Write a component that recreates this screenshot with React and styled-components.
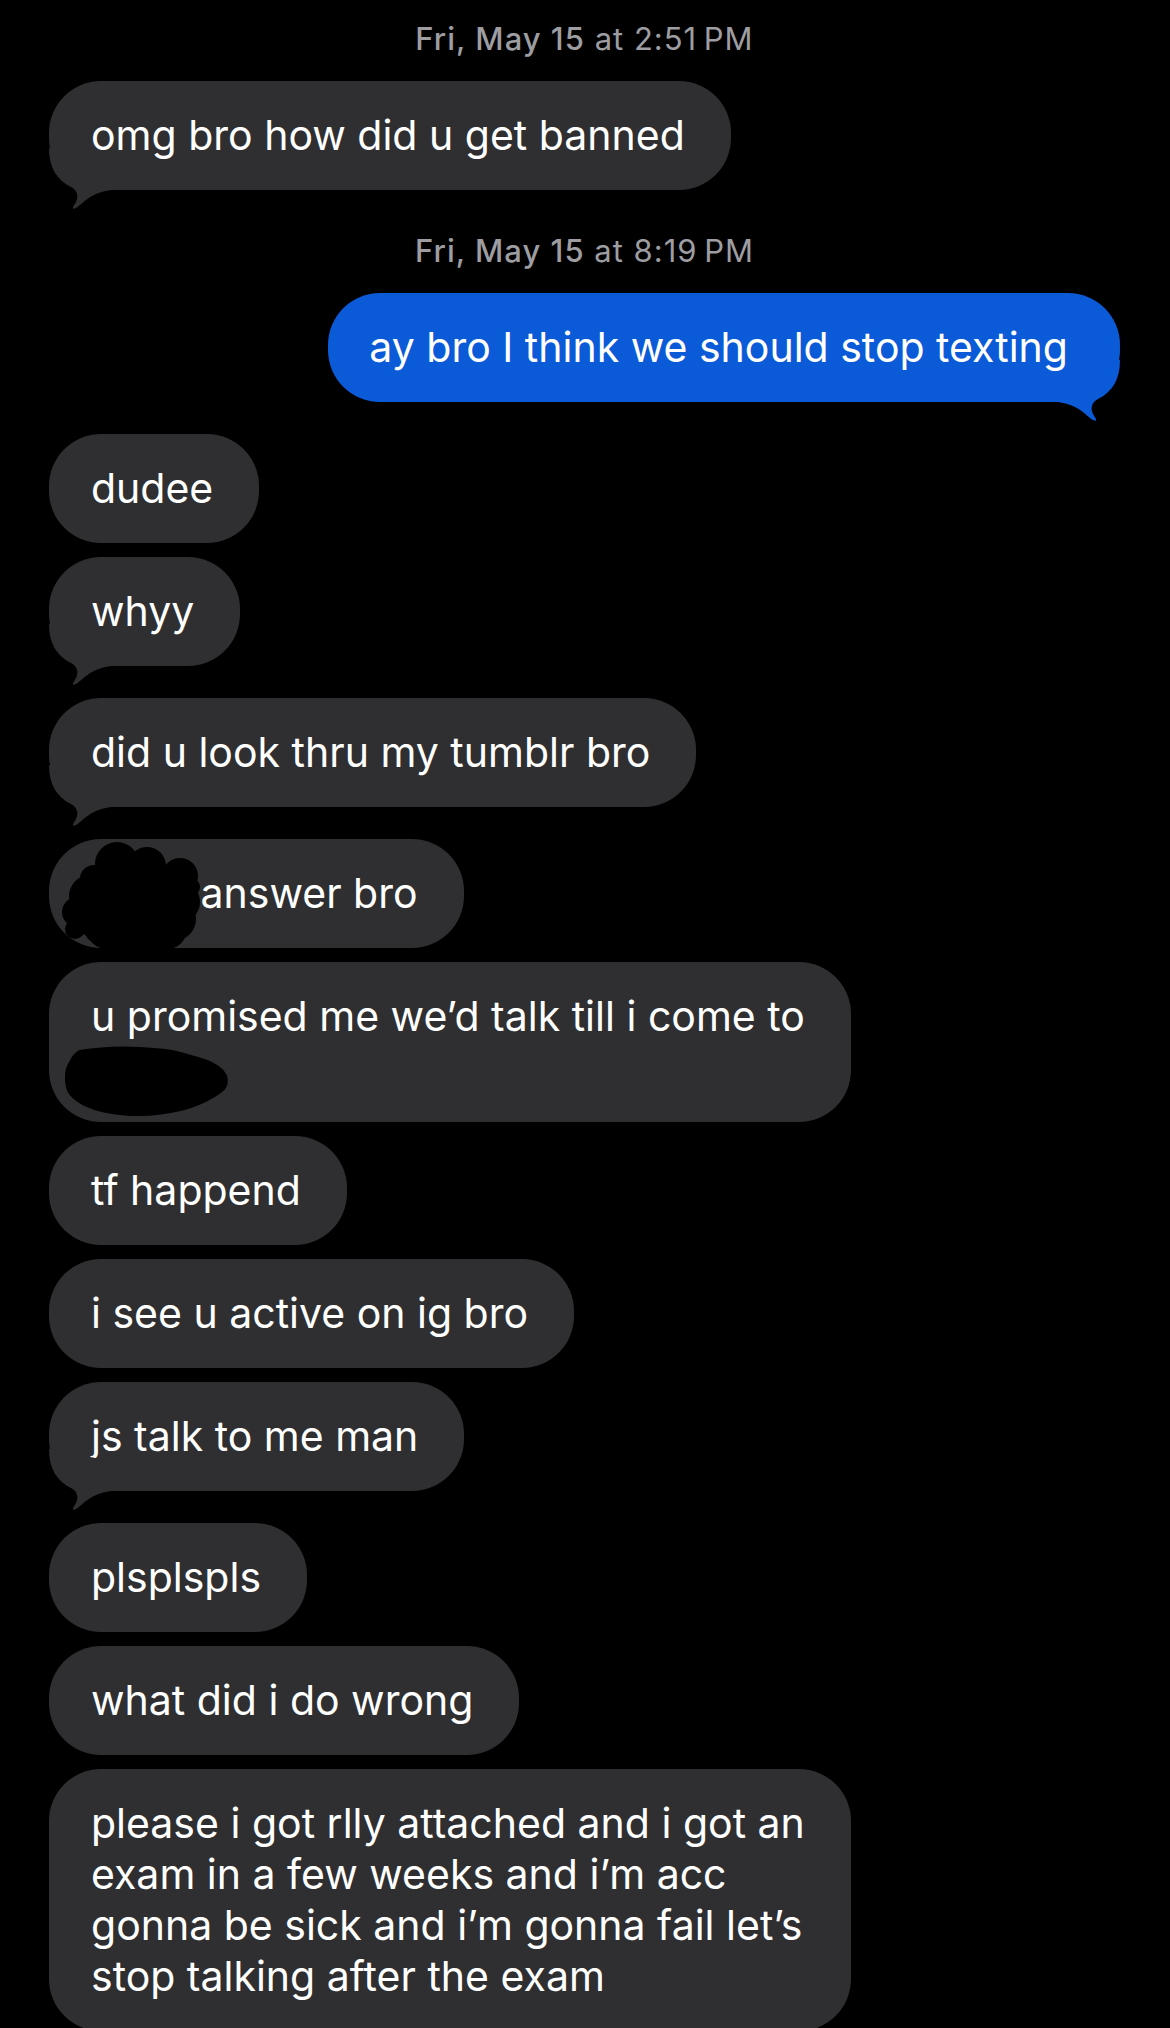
import React from 'react'
import styled, { createGlobalStyle } from 'styled-components'

const GlobalStyle = createGlobalStyle`
  html, body {
    margin: 0;
    padding: 0;
    background: #000;
  }
  body {
    font-family: Inter, "Noto Sans", "Liberation Sans", sans-serif;
    -webkit-font-smoothing: antialiased;
  }
`

const GREY = '#2f2f31'
const BLUE = '#0b5ad8'

const Thread = styled.div`
  display: flex;
  flex-direction: column;
  padding: 22px 50px 0 49px;
  height: 2028px;
  box-sizing: border-box;
  overflow: hidden;
`

const Stamp = styled.div`
  align-self: center;
  font-size: 31px;
  letter-spacing: 1px;
  line-height: 34px;
  color: #9d9da2;
  margin: ${p => (p.$first ? '0' : '12px')} 0 25px;
  b {
    font-weight: 500;
  }
`

const Bubble = styled.div`
  position: relative;
  align-self: ${p => (p.$mine ? 'flex-end' : 'flex-start')};
  background: ${p => (p.$mine ? BLUE : GREY)};
  color: #fff;
  font-size: 41px;
  line-height: 51px;
  padding: ${p => (p.$mine ? '29px 52px 29px 41px' : '29px 46px 29px 42px')};
  border-radius: 52px;
  margin-bottom: ${p => (p.$tail ? 32 : 14)}px;
  white-space: nowrap;
`

const Line = styled.div`
  display: block;
`

const Spacer = styled.span`
  display: inline-block;
  width: ${p => p.$w}px;
  height: 1px;
`

const TailMark = styled.svg`
  position: absolute;
  bottom: -20px;
  width: 70px;
  height: 70px;
  ${p => (p.$mine ? 'right: 0; transform: scaleX(-1);' : 'left: 0;')}
`

const Scribble = styled.svg`
  position: absolute;
  left: 0;
  top: 0;
  overflow: visible;
`

function Tail({ mine }) {
  return (
    <TailMark $mine={mine} viewBox="0 0 70 70">
      <path
        fill={mine ? BLUE : GREY}
        d="M0 8 C0 28 8 40 22 47 C28 50 30 56 27 62 L24 67 Q23 70 27 68 C34 64 40 53 62 50 L62 20 Z"
      />
    </TailMark>
  )
}

// blob of marker strokes over the first word
function BlobScribble() {
  const dots = [
    [68, 25, 22], [98, 27, 19], [131, 37, 18], [41, 57, 21], [28, 73, 15],
    [58, 90, 20], [118, 90, 20], [131, 63, 20], [84, 63, 31], [90, 92, 18],
    [45, 40, 14], [108, 50, 22], [26, 90, 10], [142, 48, 9],
    [70, 62, 34], [108, 72, 30], [58, 82, 26], [98, 96, 20], [40, 76, 20],
    [76, 100, 14], [125, 80, 22],
  ]
  return (
    <Scribble width="160" height="120" viewBox="0 0 160 120">
      {dots.map(([cx, cy, r], i) => (
        <circle key={i} cx={cx} cy={cy} r={r} fill="#000" />
      ))}
    </Scribble>
  )
}

// long oval stroke over the place name
function OvalScribble() {
  return (
    <Scribble width="190" height="160" viewBox="0 0 190 160">
      <path
        fill="#000"
        stroke="#000"
        strokeWidth="6"
        strokeLinejoin="round"
        d="M31 91 C55 87 75 87 91 88 C110 89 122 90 131 93 C145 97 152 99 158 101 C166 105 172 108 175 114 C177 120 175 125 171 128 C166 132 162 134 158 136 C148 141 140 144 131 146 C118 149 104 151 91 151 C78 151 67 150 58 148 C48 146 40 143 34 140 C27 136 23 132 21 128 C19 123 19 119 19 115 C19 109 21 104 23 101 C25 96 28 93 31 91 Z"
      />
    </Scribble>
  )
}

const thread = [
  { stamp: ['Fri, May 15', 'at 2:51\u2009PM'] },
  { lines: ['omg bro how did u get banned'], tail: true },
  { stamp: ['Fri, May 15', 'at 8:19\u2009PM'] },
  { lines: ['ay bro I think we should stop texting'], mine: true, tail: true },
  { lines: ['dudee'] },
  { lines: ['whyy'], tail: true },
  { lines: ['did u look thru my tumblr bro'], tail: true },
  { kind: 'answer' },
  { kind: 'promised' },
  { lines: ['tf happend'] },
  { lines: ['i see u active on ig bro'] },
  { lines: ['js talk to me man'], tail: true },
  { lines: ['plsplspls'] },
  { lines: ['what did i do wrong'] },
  {
    lines: [
      'please i got rlly attached and i got an',
      'exam in a few weeks and i\u2019m acc',
      'gonna be sick and i\u2019m gonna fail let\u2019s',
      'stop talking after the exam',
    ],
  },
]

function Message({ item, first }) {
  if (item.stamp) {
    return (
      <Stamp $first={first}>
        <b>{item.stamp[0]}</b> {item.stamp[1]}
      </Stamp>
    )
  }
  if (item.kind === 'answer') {
    return (
      <Bubble>
        <Spacer $w={98} /> answer bro
        <BlobScribble />
      </Bubble>
    )
  }
  if (item.kind === 'promised') {
    return (
      <Bubble>
        <Line>u promised me we{'\u2019'}d talk till i come to</Line>
        <Line>
          <Spacer $w={110} />
        </Line>
        <OvalScribble />
      </Bubble>
    )
  }
  return (
    <Bubble $mine={item.mine} $tail={item.tail}>
      {item.lines.map((l, i) => (
        <Line key={i}>{l}</Line>
      ))}
      {item.tail && <Tail mine={item.mine} />}
    </Bubble>
  )
}

export default function App() {
  return (
    <>
      <GlobalStyle />
      <Thread>
        {thread.map((item, i) => (
          <Message key={i} item={item} first={i === 0} />
        ))}
      </Thread>
    </>
  )
}
